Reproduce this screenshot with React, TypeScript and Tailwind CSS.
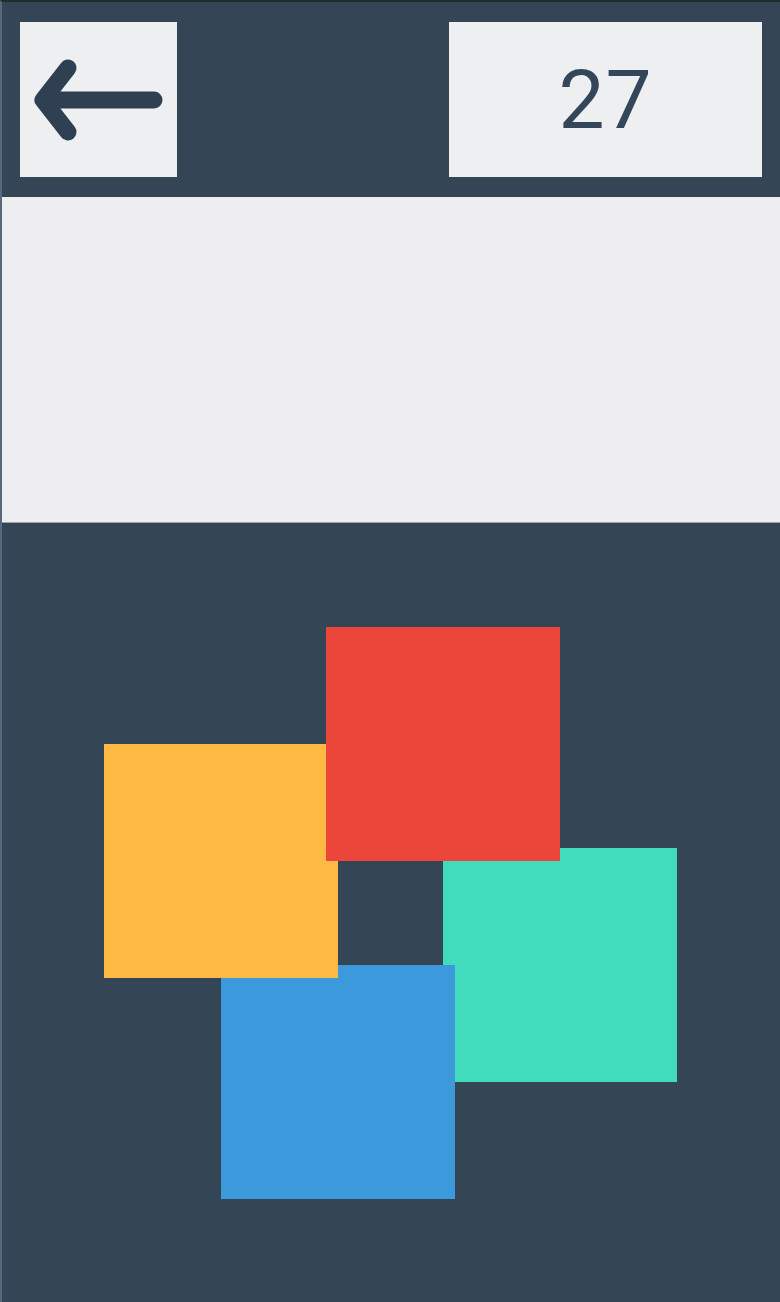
import React from 'react';

const squares = [
  { key: 'teal', cls: 'left-[441px] top-[325px] bg-[#41dcbe]' },
  { key: 'blue', cls: 'left-[219px] top-[442px] bg-[#3c9adc]' },
  { key: 'yellow', cls: 'left-[102px] top-[221px] bg-[#feb844]' },
  { key: 'red', cls: 'left-[324px] top-[104px] bg-[#ec463a]' },
];

const App: React.FC = () => {
  return (
    <div
      className="w-[780px] h-[1302px] bg-[#344656] flex flex-col border-t-2 border-t-[#1f2d2e] border-l-2 border-l-[#59687a]"
      style={{ fontFamily: 'Roboto, "Noto Sans", sans-serif' }}
    >
      <header className="h-[195px] flex items-start justify-between pt-[20px] pl-[18px] pr-[18px]">
        <button
          className="w-[157px] h-[155px] bg-[#eeeff1] flex items-center justify-center"
          aria-label="Back"
        >
          <svg width="157" height="155" viewBox="0 0 157 155" fill="none">
            <path
              d="M48 46 L23 78 L48 110 M23 78 H134"
              stroke="#2f4052"
              strokeWidth="17"
              strokeLinecap="round"
              strokeLinejoin="round"
            />
          </svg>
        </button>
        <div className="w-[313px] h-[155px] bg-[#eeeff1] flex items-center justify-center">
          <span className="text-[82px] leading-none text-[#34475a] tracking-[1px]">27</span>
        </div>
      </header>
      <section className="h-[326px] bg-[#eeeef0] border-b border-b-[#9aa2ac]" />
      <main className="flex-1 relative">
        {squares.map(s => (
          <div key={s.key} className={`absolute w-[234px] h-[234px] ${s.cls}`} />
        ))}
      </main>
    </div>
  );
};

export default App;
